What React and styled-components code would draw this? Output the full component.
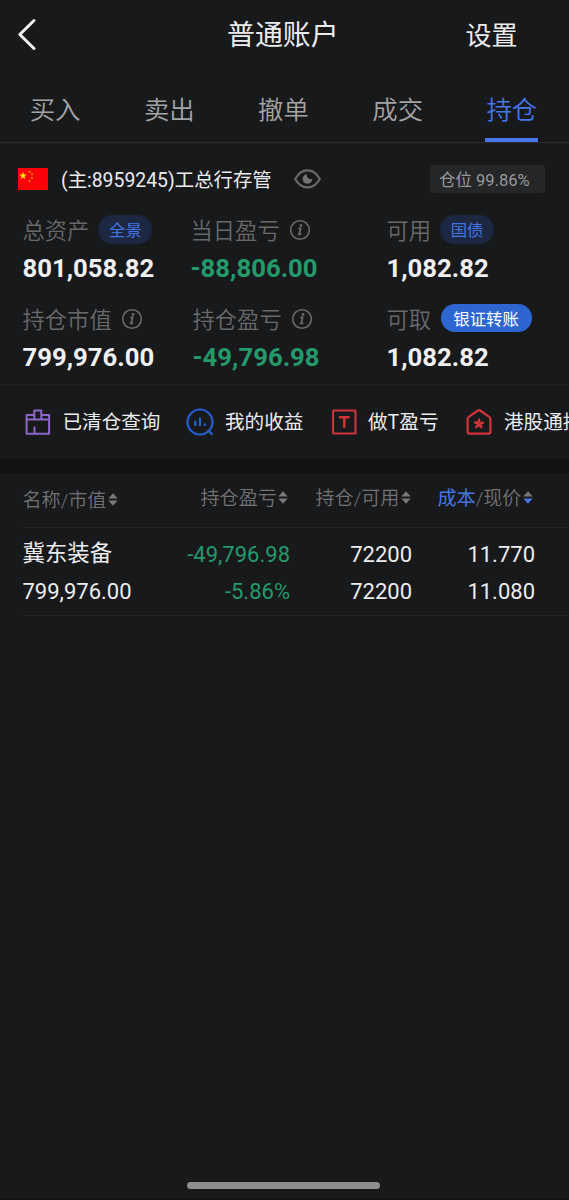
import React from 'react';
import styled, { createGlobalStyle } from 'styled-components';

const GlobalStyle = createGlobalStyle`
  * { box-sizing: border-box; }
  body { margin: 0; background: #18191b; }
`;

const Screen = styled.div`
  width: 569px;
  height: 1200px;
  overflow: hidden;
  display: flex;
  flex-direction: column;
  background: #18191b;
  color: #ececee;
  font-family: Roboto, "Noto Sans CJK SC", sans-serif;
  font-weight: 400;
  white-space: nowrap;
  border-bottom: 1px solid #121013;
`;

const Header = styled.header`
  display: grid;
  grid-template-columns: 227px 238.5px 1fr;
  align-items: center;
  height: 70px;
  line-height: 40px;
`;

const BackButton = styled.button`
  display: flex;
  width: 40px;
  padding: 0 0 0 16px;
  margin-top: -3px;
  border: 0;
  background: none;
`;

const Title = styled.h1`
  margin: 0;
  padding-top: 1px;
  font-size: 27.9px;
  font-weight: 400;
  line-height: 40px;
`;

const Settings = styled.span`
  padding-top: 1px;
  font-size: 26px;
`;

const Tabs = styled.nav`
  display: grid;
  grid-template-columns: repeat(5, 114.2px);
  justify-items: center;
  height: 73px;
  padding-top: 20px;
  border-bottom: 1px solid #292a2c;
`;

const Tab = styled.a`
  height: 52px;
  margin-left: -4px;
  padding: 0 1px;
  font-size: 25.4px;
  font-weight: 350;
  line-height: 41px;
  color: ${(p) => (p.$active ? '#4577e8' : '#a3a4a6')};
  border-bottom: 4px solid ${(p) => (p.$active ? '#4577e8' : 'transparent')};
`;

const Account = styled.div`
  display: flex;
  align-items: center;
  height: 28px;
  margin-top: 22px;
  padding: 0 24px 0 18px;
`;

const AccountName = styled.span`
  width: 233px;
  margin-left: 13px;
  padding-top: 3px;
  font-size: 19.4px;
  line-height: 28px;
`;

const Ratio = styled.span`
  width: 115px;
  height: 28px;
  margin-left: auto;
  padding-left: 9px;
  border-radius: 3px;
  background: #252628;
  color: #98999b;
  font-size: 16.5px;
  line-height: 31px;
`;

const Metrics = styled.section`
  display: grid;
  grid-template-columns: 168px 196px 1fr;
  row-gap: 17px;
  height: 192px;
  padding: 23px 0 0 22.5px;
  align-content: start;
  border-bottom: 1px solid #202123;
`;

const Metric = styled.div`
  height: 72px;
`;

const MetricLabel = styled.div`
  display: flex;
  align-items: center;
  height: 29px;
  color: #68696b;
  font-size: 22.3px;
  font-weight: 350;
  line-height: 32px;
  padding-left: ${(p) => p.$indent || 0}px;
`;

const MetricValue = styled.div`
  margin-top: 7px;
  padding-left: ${(p) => p.$indent || 0}px;
  font-size: 25.7px;
  font-weight: 700;
  line-height: 32px;
  color: ${(p) => (p.$down ? '#249a6b' : '#f0f0f2')};
`;

const Pill = styled.span`
  width: ${(p) => p.$width}px;
  height: ${(p) => (p.$solid ? 28 : 29)}px;
  margin: ${(p) => (p.$solid ? '-3px 0 0 9.500px' : '-2px 0 0 9px')};
  border-radius: 15px;
  background: ${(p) => (p.$solid ? '#2d66d0' : '#1c2841')};
  color: ${(p) => (p.$solid ? '#ffffff' : '#4474e0')};
  font-size: 16.4px;
  font-weight: 400;
  line-height: ${(p) => (p.$solid ? 31 : 32)}px;
  text-align: center;
`;

const InfoSvg = styled.svg`
  margin: -1px 0 0 9px;
`;

const Shortcuts = styled.section`
  display: flex;
  align-items: center;
  height: 73px;
  padding-left: 23px;
  overflow: hidden;
`;

const Shortcut = styled.div`
  display: flex;
  flex: none;
  align-items: center;
  width: ${(p) => p.$width}px;
  gap: ${(p) => p.$gap}px;
  font-size: 19.6px;
  line-height: 30px;
`;

const ShortcutText = styled.span`
  padding-top: 3px;
`;

const Band = styled.div`
  height: 15px;
  background: #111214;
`;

const Table = styled.section`
  margin-left: 22.5px;
`;

const TableHead = styled.div`
  display: flex;
  height: 55px;
  border-bottom: 1px solid #212224;
  color: #717274;
  font-size: 19.1px;
  font-weight: 350;
  line-height: 30px;
`;

const HeadCell = styled.div`
  display: flex;
  align-items: center;
  gap: 1.5px;
  height: 28px;
  margin-top: ${(p) => p.$top}px;
  width: ${(p) => p.$width}px;
`;

const SortSvg = styled.svg`
  margin-top: -3px;
`;

const Accent = styled.span`
  color: #4577e8;
  font-weight: 400;
`;

const Holding = styled.div`
  display: grid;
  grid-template-columns: 144.5px 123px 122px 123px;
  height: 88px;
  padding-top: 7px;
  border-bottom: 1px solid #212224;
  font-size: 22px;
  line-height: 37px;
`;

const Cell = styled.div`
  text-align: ${(p) => (p.$left ? 'left' : 'right')};
  padding-top: ${(p) => (p.$left ? 0 : 1)}px;
  color: ${(p) => (p.$down ? '#249a6b' : '#ececee')};
`;

const StockName = styled.div`
  height: 38px;
  font-size: 22.4px;
  line-height: 36px;
`;

const Line = styled.div`
  height: 37px;
`;

const HomeBar = styled.div`
  width: 193px;
  height: 7px;
  margin: auto 0 10px 187px;
  flex: none;
  border-radius: 4px;
  background: #8d8e90;
`;

const Flag = () => (
  <svg width="30" height="22" viewBox="0 0 30 22">
    <rect width="30" height="22" fill="#fb0007" />
    <path fill="#ffe800" d="M5 3.7l1 2.7 2.900.1-2.300 1.800.8 2.800L5 9.500l-2.400 1.600.8-2.800L1.100 6.500 4 6.400z" />
    <g fill="#f7a400">
      <circle cx="11.5" cy="3.7" r="1" />
      <circle cx="14" cy="6.2" r="1" />
      <circle cx="14" cy="10" r="1" />
      <circle cx="11.5" cy="13" r="1" />
    </g>
  </svg>
);

const Eye = () => (
  <svg width="27" height="20" viewBox="0 0 27 20" fill="none">
    <path d="M1.2 10C4.3 4.4 8.6 1.4 13.5 1.4S22.7 4.4 25.8 10C22.7 15.6 18.4 18.4 13.5 18.4S4.3 15.6 1.2 10z" stroke="#68696b" strokeWidth="2.2" strokeLinejoin="round" />
    <path d="M12.8 5.2A4.800 4.800 0 1 0 18.200 9.500Q16.500 10.800 14.600 9.600Q12.300 8.200 12.800 5.200z" fill="#747577" />
  </svg>
);

const Info = () => (
  <InfoSvg width="22" height="22" viewBox="0 0 22 22" fill="none" stroke="#68696b">
    <circle cx="11" cy="11" r="9.3" strokeWidth="1.6" />
    <path d="M9.3 9.3h2.3l-1.3 6.1h2.1M8.800 15.400h1.500" strokeWidth="1.8" />
    <circle cx="12" cy="6.5" r="1.4" fill="#68696b" stroke="none" />
  </InfoSvg>
);

const Sort = ({ down }) => (
  <SortSvg width="10" height="13" viewBox="0 0 10 13">
    <path d="M5 0.2L9.700 5.500H0.300z" fill="#77787a" />
    <path d="M5 12.800L9.700 7.500H0.300z" fill={down ? '#4577e8' : '#77787a'} />
  </SortSvg>
);

const ClearedIcon = () => (
  <svg width="29" height="28" viewBox="0 0 29 28" fill="none" stroke="#8c66c8" strokeWidth="2">
    <path d="M11.3 7H3.600V25.800H26.100V7H18.300M3.600 11.600H26.100M11.300 11.600V2.600H18.300V11.600M11.500 25.500V18.500" strokeLinejoin="round" />
  </svg>
);

const IncomeIcon = () => (
  <svg width="29" height="30" viewBox="0 0 29 30" fill="none" stroke="#255fce" strokeWidth="2.2">
    <circle cx="14" cy="15" r="12.5" />
    <path d="M22 23L26.500 27.800M9.300 13.500V19M14 10.500V19M18.800 16.500V19" />
  </svg>
);

const TIcon = () => (
  <svg width="25" height="26" viewBox="0 0 25 26" fill="none" stroke="#d3343b">
    <rect x="1.1" y="1.6" width="22.4" height="22.8" rx="0.5" strokeWidth="2" />
    <path d="M7 8.200H17.600M12.300 8.200V18.700" strokeWidth="2.500" />
  </svg>
);

const HkIcon = () => (
  <svg width="26" height="28" viewBox="0 0 26 28" fill="none">
    <path d="M2.8 8.800L11.900 2.500Q13 1.800 14.100 2.500L23.200 8.800Q24.400 9.700 24.400 11.200V23.500Q24.400 25.600 22.300 25.600H3.700Q1.600 25.600 1.600 23.500V11.200Q1.600 9.700 2.800 8.800z" stroke="#d3343b" strokeWidth="2.2" />
    <g fill="#d3343b">
      {[0, 72, 144, 216, 288].map((a) => (
        <path key={a} transform={`rotate(${a} 13 15.800)`} d="M13 15.600C10.800 13.600 11.300 10.800 14 10C13.700 11.700 15.600 13 13.700 15.700z" />
      ))}
    </g>
  </svg>
);

const Measure = ({ label, value, indent, down, children }) => (
  <Metric>
    <MetricLabel $indent={indent}>
      {label}
      {children}
    </MetricLabel>
    <MetricValue $indent={indent} $down={down}>{value}</MetricValue>
  </Metric>
);

export default function App() {
  return (
    <Screen>
      <GlobalStyle />
      <Header>
        <BackButton aria-label="返回">
          <svg width="22" height="34" viewBox="0 0 22 34" fill="none">
            <path d="M18 3.5L3.8 17.500L18 31.500" stroke="#f2f2f4" strokeWidth="3" strokeLinecap="round" strokeLinejoin="round" />
          </svg>
        </BackButton>
        <Title>普通账户</Title>
        <Settings>设置</Settings>
      </Header>
      <Tabs>
        {['买入', '卖出', '撤单', '成交', '持仓'].map((name) => (
          <Tab key={name} $active={name === '持仓'}>{name}</Tab>
        ))}
      </Tabs>
      <Account>
        <Flag />
        <AccountName>(主:8959245)工总行存管</AccountName>
        <Eye />
        <Ratio>仓位 99.86%</Ratio>
      </Account>
      <Metrics>
        <Measure label="总资产" value="801,058.82"><Pill $width={54}>全景</Pill></Measure>
        <Measure label="当日盈亏" value="-88,806.00" down><Info /></Measure>
        <Measure label="可用" value="1,082.82"><Pill $width={54}>国债</Pill></Measure>
        <Measure label="持仓市值" value="799,976.00"><Info /></Measure>
        <Measure label="持仓盈亏" value="-49,796.98" indent={2} down><Info /></Measure>
        <Measure label="可取" value="1,082.82"><Pill $width={91} $solid>银证转账</Pill></Measure>
      </Metrics>
      <Shortcuts>
        <Shortcut $width={163} $gap={10.5}><ClearedIcon /><ShortcutText>已清仓查询</ShortcutText></Shortcut>
        <Shortcut $width={146} $gap={10}><IncomeIcon /><ShortcutText>我的收益</ShortcutText></Shortcut>
        <Shortcut $width={134} $gap={11}><TIcon /><ShortcutText>做T盈亏</ShortcutText></Shortcut>
        <Shortcut $width={200} $gap={12}><HkIcon /><ShortcutText>港股通持仓</ShortcutText></Shortcut>
      </Shortcuts>
      <Band />
      <Table>
        <TableHead>
          <HeadCell $width={178} $top={14}>名称/市值<Sort /></HeadCell>
          <HeadCell $width={115} $top={12}>持仓盈亏<Sort /></HeadCell>
          <HeadCell $width={122} $top={12}>持仓/可用<Sort /></HeadCell>
          <HeadCell $width={108} $top={12}><span><Accent>成本</Accent>/现价</span><Sort down /></HeadCell>
        </TableHead>
        <Holding>
          <Cell $left><StockName>冀东装备</StockName><Line>799,976.00</Line></Cell>
          <Cell $down><Line>-49,796.98</Line><Line>-5.86%</Line></Cell>
          <Cell><Line>72200</Line><Line>72200</Line></Cell>
          <Cell><Line>11.770</Line><Line>11.080</Line></Cell>
        </Holding>
      </Table>
      <HomeBar />
    </Screen>
  );
}
